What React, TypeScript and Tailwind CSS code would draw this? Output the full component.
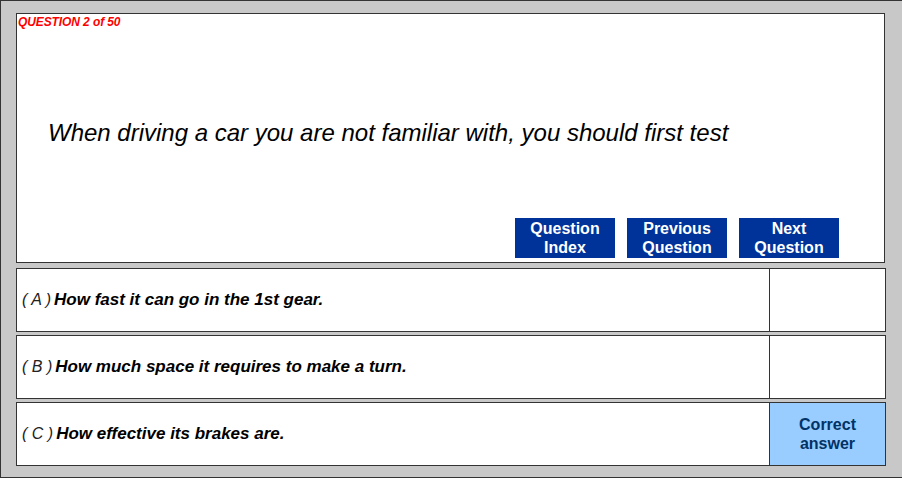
import React from "react";

const options = [
  { letter: "A", text: "How fast it can go in the 1st gear.", correct: false },
  { letter: "B", text: "How much space it requires to make a turn.", correct: false },
  { letter: "C", text: "How effective its brakes are.", correct: true },
];

export default function App() {
  return (
    <div
      className="w-[902px] h-[478px] bg-[#c8c8c8] border-l border-t border-b border-[#333] pl-[15px] pt-[12px] overflow-hidden"
      style={{ fontFamily: '"Liberation Sans", Arial, sans-serif' }}
    >
      <div className="w-[869px] h-[250px] bg-white border border-[#333] flex flex-col">
        <div className="pl-[1px] pt-[1px] text-[12px] leading-[14px] font-bold italic text-[#ff0000] tracking-[-0.1px]">
          QUESTION 2 of 50
        </div>
        <div className="pl-[31px] pt-[90px] text-[24px] leading-[28px] italic text-black">
          When driving a car you are not familiar with, you should first test
        </div>
        <div className="flex-1" />
        <div className="flex justify-end gap-[12px] pr-[45px] pb-[4px]">
          {[
            ["Question", "Index"],
            ["Previous", "Question"],
            ["Next", "Question"],
          ].map(([a, b]) => (
            <div
              key={a + b}
              className="w-[100px] h-[40px] bg-[#003399] text-white font-bold text-[16px] leading-[19px] flex flex-col items-center justify-center"
            >
              <span>{a}</span>
              <span>{b}</span>
            </div>
          ))}
        </div>
      </div>
      <div className="mt-[5px] flex flex-col gap-[3px]">
        {options.map((o) => (
          <div
            key={o.letter}
            className="w-[870px] h-[64px] bg-white border border-[#333] flex"
          >
            <div className="flex-1 flex items-center pl-[5px] text-[17px] italic text-black">
              <span className="font-normal text-[16px] mr-[3px] text-[#222]">( {o.letter} )</span>
              <span className="font-bold">{o.text}</span>
            </div>
            <div
              className={
                "w-[116px] border-l border-[#333] flex flex-col items-center justify-center font-bold text-[16px] leading-[19px] text-[#003366] " +
                (o.correct ? "bg-[#99ccff]" : "bg-white")
              }
            >
              {o.correct && (
                <>
                  <span>Correct</span>
                  <span>answer</span>
                </>
              )}
            </div>
          </div>
        ))}
      </div>
    </div>
  );
}
